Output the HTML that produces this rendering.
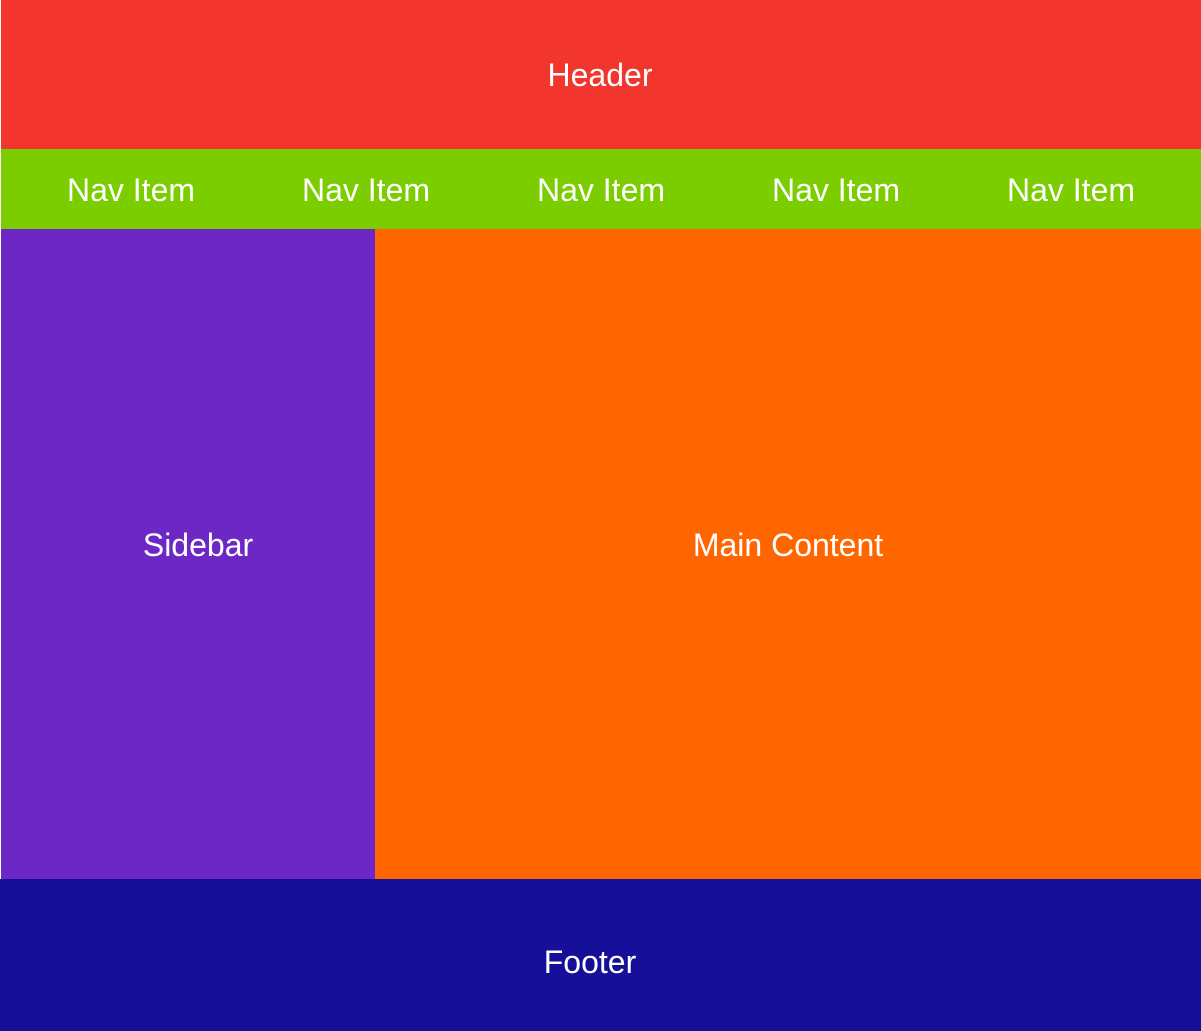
<!DOCTYPE html>
<html><head><meta charset="utf-8"><style>
html,body{margin:0;padding:0;width:1201px;height:1031px;overflow:hidden;background:#fff;position:relative;font-family:"Liberation Sans",Helvetica,Arial,sans-serif;color:#fff;}
div{position:absolute;}
.t{font-size:32px;line-height:36px;white-space:nowrap;transform:translate(-50%,-50%);}
</style></head><body>
<div style="left:1px;top:0;width:1200px;height:149px;background:#f2352d"></div>
<div style="left:1px;top:149px;width:1200px;height:80px;background:#7ccd00"></div>
<div style="left:1px;top:229px;width:374px;height:650px;background:#6c27c4"></div>
<div style="left:375px;top:229px;width:826px;height:650px;background:#ff6600"></div>
<div style="left:0;top:879px;width:1201px;height:152px;background:#160f9a"></div>
<div class="t" style="left:600px;top:75px">Header</div>
<div class="t" style="left:131px;top:190px">Nav Item</div>
<div class="t" style="left:366px;top:190px">Nav Item</div>
<div class="t" style="left:601px;top:190px">Nav Item</div>
<div class="t" style="left:836px;top:190px">Nav Item</div>
<div class="t" style="left:1071px;top:190px">Nav Item</div>
<div class="t" style="left:198px;top:545px">Sidebar</div>
<div class="t" style="left:788px;top:545px">Main Content</div>
<div class="t" style="left:590px;top:962px">Footer</div>
</body></html>
